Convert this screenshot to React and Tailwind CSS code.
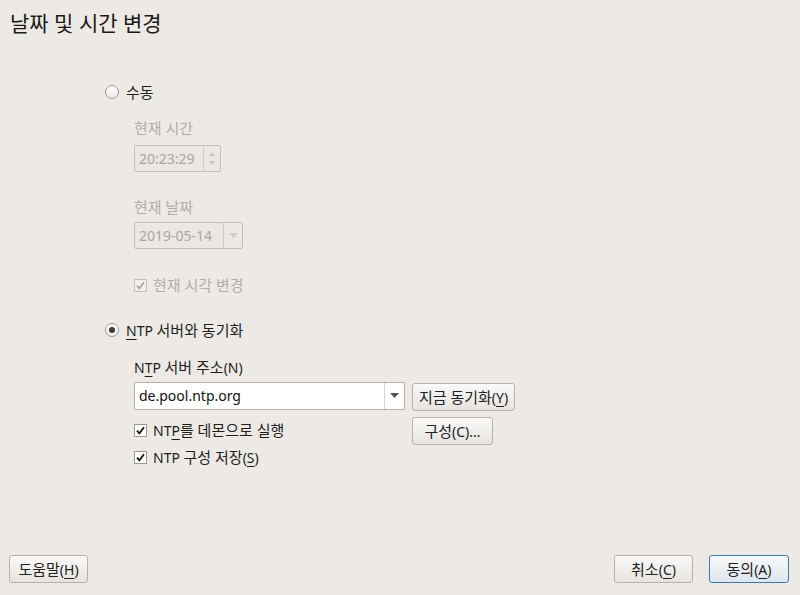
import React from "react"

const font = { fontFamily: '"Noto Sans", "Noto Sans CJK KR", sans-serif' }

// korean runs render a touch wider than the latin text around them
function K({ children }) {
	return <span className="text-[15px]">{children}</span>
}

function U({ children }) {
	return <span className="underline underline-offset-[3px]">{children}</span>
}

function Radio({ checked }) {
	return (
		<span className="flex h-[14px] w-[14px] items-center justify-center rounded-full border border-[#9d9891] bg-gradient-to-b from-white to-[#ecebe9]">
			{checked && <span className="h-[6px] w-[6px] rounded-full bg-[#3a3a3a]" />}
		</span>
	)
}

function Check({ disabled }) {
	return (
		<span
			className={
				"flex h-[13px] w-[13px] items-center justify-center border " +
				(disabled ? "border-[#c4c0ba] bg-[#f1efec]" : "border-[#9d9891] bg-white")
			}
		>
			<svg width="9" height="9" viewBox="0 0 9 9" fill="none">
				<path d="M1 4.6 L3.4 7.3 L8 1.2" stroke={disabled ? "#aaa6a0" : "#111"} strokeWidth="1.8" />
			</svg>
		</span>
	)
}

function Button({ children, className = "", primary }) {
	return (
		<button
			className={
				"flex h-[28px] items-center justify-center rounded-[3px] border text-[14px] text-[#222] " +
				(primary
					? "border-[#3c7bad] bg-gradient-to-b from-[#f7f9fb] to-[#dfe6ec]"
					: "border-[#b6b1aa] bg-gradient-to-b from-[#fbfaf9] to-[#e6e3df]") +
				" " +
				className
			}
		>
			{children}
		</button>
	)
}

function Arrow({ color = "#555" }) {
	return (
		<svg width="9" height="5" viewBox="0 0 9 5">
			<path d="M0 0 L9 0 L4.5 5 Z" fill={color} />
		</svg>
	)
}

export default function App() {
	return (
		<div className="flex h-[595px] w-[800px] flex-col bg-[#edeae6] text-[14px] text-[#1e1e1e]" style={font}>
			<div className="pl-[10px] pt-[8px] text-[21px] leading-[30px] text-[#1a1a1a]">날짜 및 시간 변경</div>

			<div className="flex flex-1 flex-col pl-[105px] pt-[44px]">
				<div className="flex h-[20px] items-center gap-[7px]">
					<Radio />
					<K>수동</K>
				</div>

				<div className="ml-[29px] flex flex-col text-[#b1ada7]">
					<div className="mt-[16px] h-[20px] leading-[20px]">
						<K>현재 시간</K>
					</div>
					<div className="mt-[7px] flex h-[27px] w-[87px] rounded-[2px] border border-[#c4c0ba] bg-[#ebe8e4]">
						<div className="flex flex-1 items-center pl-[4px] text-[#aaa6a0]">20:23:29</div>
						<div className="flex w-[17px] flex-col items-center justify-center gap-[5px] border-l border-[#d0ccc6]">
							<svg width="6" height="4" viewBox="0 0 6 4"><path d="M0 4 L3 0 L6 4 Z" fill="#c8c4be" /></svg>
							<svg width="6" height="4" viewBox="0 0 6 4"><path d="M0 0 L6 0 L3 4 Z" fill="#c8c4be" /></svg>
						</div>
					</div>

					<div className="mt-[25px] h-[20px] leading-[20px]">
						<K>현재 날짜</K>
					</div>
					<div className="mt-[5px] flex h-[27px] w-[109px] rounded-[2px] border border-[#c4c0ba] bg-[#ebe8e4]">
						<div className="flex flex-1 items-center pl-[4px] text-[#aaa6a0]">2019-05-14</div>
						<div className="flex w-[19px] items-center justify-center border-l border-[#d0ccc6]">
							<Arrow color="#cfcbc5" />
						</div>
					</div>

					<div className="mt-[26px] flex h-[20px] items-center gap-[6px]">
						<Check disabled />
						<K>현재 시각 변경</K>
					</div>
				</div>

				<div className="mt-[25px] flex h-[20px] items-center gap-[7px]">
					<Radio checked />
					<span>
						<U>N</U>TP <K>서버와 동기화</K>
					</span>
				</div>

				<div className="ml-[29px] flex flex-col">
					<div className="mt-[17px] h-[20px] leading-[20px]">
						N<U>T</U>P <K>서버 주소</K>(N)
					</div>
					<div className="mt-[3px] flex items-center gap-[7px]">
						<div className="flex h-[28px] w-[271px] rounded-[2px] border border-[#b3aea7] bg-white">
							<div className="flex flex-1 items-center pl-[4px] text-[#111]">de.pool.ntp.org</div>
							<div className="flex w-[20px] items-center justify-center border-l border-[#d6d2cc]">
								<Arrow />
							</div>
						</div>
						<Button className="mt-[3px] w-[103px]">
							<K>지금 동기화</K>(<U>Y</U>)
						</Button>
					</div>
					<div className="mt-[6px] flex items-start gap-[7px]">
						<div className="flex w-[271px] flex-col gap-[7px] pt-[3px]">
							<div className="flex h-[20px] items-center gap-[6px]">
								<Check />
								<span>
									NT<U>P</U>
									<K>를 데몬으로 실행</K>
								</span>
							</div>
							<div className="flex h-[20px] items-center gap-[6px]">
								<Check />
								<span>
									NTP <K>구성 저장</K>(<U>S</U>)
								</span>
							</div>
						</div>
						<Button className="w-[81px]">
							<K>구성</K>(C)...
						</Button>
					</div>
				</div>
			</div>

			<div className="flex items-center justify-between pb-[12px] pl-[9px] pr-[11px]">
				<Button className="w-[79px]">
					<K>도움말</K>(<U>H</U>)
				</Button>
				<div className="flex gap-[16px]">
					<Button className="w-[79px]">
						<K>취소</K>(<U>C</U>)
					</Button>
					<Button primary className="w-[80px]">
						<K>동의</K>(<U>A</U>)
					</Button>
				</div>
			</div>
		</div>
	)
}
